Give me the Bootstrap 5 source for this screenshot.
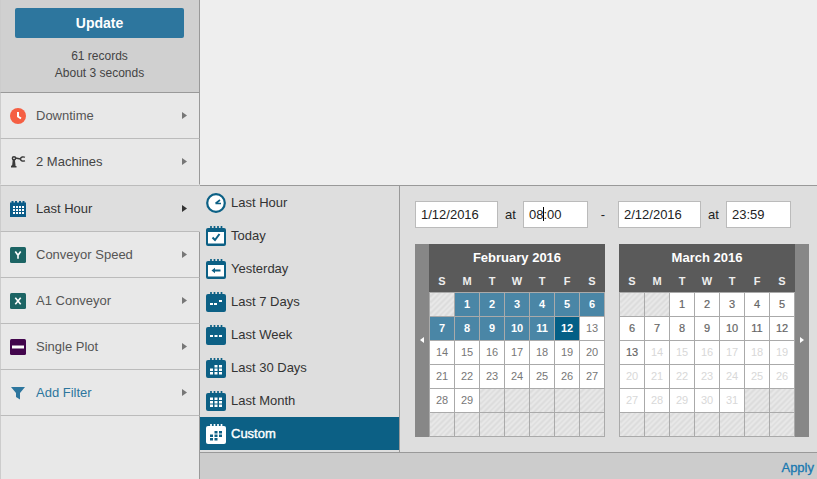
<!DOCTYPE html>
<html lang="en">
<head>
<meta charset="utf-8">
<meta name="viewport" content="width=device-width, initial-scale=1">
<title>Filters</title>
<link href="https://cdn.jsdelivr.net/npm/bootstrap@5.3.0/dist/css/bootstrap.min.css" rel="stylesheet">
<style>
  body { font: 13px/17px "Liberation Sans", Arial, sans-serif; color: #333; background: #eee; }
  .side { width: 200px; background: #e8e8e8; }
  .side > * { border-left: 1px solid #ccc; border-right: 1px solid #999; }
  .summary { background: #d0d0d0; border-bottom: 1px solid #999; padding: 8px 15px 10px 14px; font-size: 12px; color: #444; }
  .btn-update { background: #2d769e; color: #fff; font: bold 14px/20px "Liberation Sans", Arial, sans-serif; padding: 5px; border: 0; border-radius: 2px; margin-bottom: 10px; }
  .btn-update:hover { background: #25688c; color: #fff; }
  .filter-item { display: flex; align-items: center; gap: 10px; height: 46px; padding: 0 12px 0 9px; background: transparent; border-width: 0 1px 1px; border-style: solid; border-color: #bbb #999 #bbb #ccc; color: #555; text-align: left; }
  .filter-item.strong { color: #444; }
  .filter-item:has(+ .current) { border-bottom-color: #e8e8e8; }
  .filter-item.current { height: 47px; border-top: 1px solid #bbb; background: #dedede; border-right-color: #dedede; color: #333; }
  .filter-item.add { color: #2d769e; }
  .arrow { width: 5px; height: 7px; fill: #777; }
  .current .arrow { fill: #333; }
  .flyout { background: #dedede; border-top: 1px solid #999; }
  .presets { width: 200px; border-right: 1px solid #999; padding-bottom: 2px; }
  .preset { display: flex; align-items: center; gap: 5px; width: 100%; height: 33px; padding: 0 6px; border: 0; background: transparent; color: #333; --ink: #0c6085; }
  .preset.chosen { background: #0c6085; color: #fff; --ink: #fff; -webkit-text-stroke: 0.4px #fff; }
  .range { padding: 15px 8px 15px 15px; color: #222; }
  .field { height: 27px; padding: 0 5px; border: 1px solid #bbb; border-radius: 0; background: #fff; color: #222; }
  .f-date { width: 83px; }
  .f-time { width: 65px; }
  .sep { width: 25px; text-align: center; }
  .sep-wide { width: 30px; text-align: center; }
  .caret { position: absolute; left: 20px; top: 6px; width: 1px; height: 14px; background: #000; }
  .cals { margin-top: 16px; }
  .pager { width: 14px; padding: 0; border: 0; background: #878787; }
  .pager svg { width: 4px; height: 6px; fill: #fff; display: block; margin: auto; }
  .cal { width: 176px; table-layout: fixed; border-collapse: collapse; text-align: center; font-size: 11px; line-height: 16px; color: #777; background: #5a5a5a; }
  .cal caption { caption-side: top; background: #5a5a5a; color: #fff; font: bold 13px/28px "Liberation Sans", Arial, sans-serif; text-align: center; padding: 0; }
  .cal thead th { height: 20px; padding: 0; color: #eee; line-height: 18px; vertical-align: top; }
  .cal tbody td { height: 24px; padding: 0; border: 1px solid #aaa; background: #fff; }
  .cal tbody td.pick { background: #4a86a6; color: #fff; font-weight: bold; }
  .cal tbody td.last { background: #045f86; color: #fff; font-weight: bold; }
  .cal tbody td.open { color: #666; -webkit-text-stroke: 0.2px #666; }
  .cal tbody td.off { color: #d8d8d8; }
  .cal tbody td.none { background: repeating-linear-gradient(135deg, #e8e8e8 0 2px, #dcdcdc 2px 4px); }
  .foot { background: #ccc; border-top: 1px solid #999; padding: 6px 3px 3px; text-align: right; }
  .foot a { color: #1878b0; text-decoration: none; -webkit-text-stroke: 0.3px #1878b0; }
</style>
<script src="https://cdn.jsdelivr.net/npm/bootstrap@5.3.0/dist/js/bootstrap.bundle.min.js"></script>
</head>
<body>
<svg class="d-none" aria-hidden="true">
  <symbol id="right" viewBox="0 0 5 7"><path d="M0 0L5 3.5L0 7z"/></symbol>
  <symbol id="calbody" viewBox="0 0 20 20"><path d="M2 2H18Q20 2 20 4V18Q20 20 18 20H2Q0 20 0 18V4Q0 2 2 2z"/><path d="M5 0V3M8.500 0V3M12 0V3M15.500 0V3" stroke="var(--ink)" stroke-width="1.700"/></symbol>
</svg>
<div class="d-flex min-vh-100">
  <aside class="side d-flex flex-column flex-shrink-0">
    <div class="summary text-center">
      <button type="button" class="btn btn-update w-100 d-block">Update</button>
      <div>61 records</div>
      <div>About 3 seconds</div>
    </div>
    <button type="button" class="filter-item">
      <svg width="16" height="16"><circle cx="8" cy="8" r="8" fill="#f55f43"/><path d="M8 4V8.500L11 10.500" fill="none" stroke="#fff" stroke-width="2"/></svg>
      <span class="flex-grow-1">Downtime</span><svg class="arrow"><use href="#right"/></svg>
    </button>
    <button type="button" class="filter-item strong">
      <svg width="16" height="16" fill="none" stroke="#3a3a3a"><path d="M2.200 11L2.800 5H4.800L5.500 11V12H6.500V13.500H1V12z" fill="#3a3a3a" stroke="none"/><circle cx="4" cy="4.300" r="1.600" stroke-width="1.500"/><path d="M5.400 4L10.500 5" stroke-width="1.700"/><path d="M14.800 3.400C13.500 2.400 10.500 2.800 10.500 5C10.500 7.300 13.500 7.600 14.800 6.600" stroke-width="1.400"/></svg>
      <span class="flex-grow-1">2 Machines</span><svg class="arrow"><use href="#right"/></svg>
    </button>
    <button type="button" class="filter-item current">
      <svg width="16" height="16"><path d="M0 1.500H1.500V0H3.500V1.500H5V0H7V1.500H9V0H11V1.500H12.500V0H14.500V1.500H16V16H0z" fill="#0b5c88"/><path d="M3 5h2v2H3zM6 5h2v2H6zM9 5h2v2H9zM12 5h2v2h-2zM3 8h2v2H3zM6 8h2v2H6zM9 8h2v2H9zM12 8h2v2h-2zM3 11h2v2H3zM6 11h2v2H6zM9 11h2v2H9zM12 11h2v2h-2z" fill="#fff"/></svg>
      <span class="flex-grow-1">Last Hour</span><svg class="arrow"><use href="#right"/></svg>
    </button>
    <button type="button" class="filter-item">
      <svg width="16" height="16"><rect width="16" height="16" rx="1.500" fill="#1c6464"/><path d="M5.300 4.500L8 8.300L10.700 4.500M8 8V11.800" fill="none" stroke="#fff" stroke-width="1.600"/></svg>
      <span class="flex-grow-1">Conveyor Speed</span><svg class="arrow"><use href="#right"/></svg>
    </button>
    <button type="button" class="filter-item">
      <svg width="16" height="16"><rect width="16" height="16" rx="1.500" fill="#1c6464"/><path d="M5.300 4.700L10.700 11.300M10.700 4.700L5.300 11.300" stroke="#fff" stroke-width="1.600"/></svg>
      <span class="flex-grow-1">A1 Conveyor</span><svg class="arrow"><use href="#right"/></svg>
    </button>
    <button type="button" class="filter-item">
      <svg width="16" height="16"><rect width="16" height="16" rx="1.500" fill="#43064d"/><path d="M2 6.500H14V9.500H2z" fill="#fff"/></svg>
      <span class="flex-grow-1">Single Plot</span><svg class="arrow"><use href="#right"/></svg>
    </button>
    <button type="button" class="filter-item add">
      <svg width="16" height="16"><path d="M1 2H15L10 8V14.500L6 12V8z" fill="#2d769e"/></svg>
      <span class="flex-grow-1">Add Filter</span><svg class="arrow"><use href="#right"/></svg>
    </button>
    <div class="flex-grow-1"></div>
  </aside>
  <main class="flex-grow-1 d-flex flex-column">
    <div class="flex-grow-1"></div>
    <section class="flyout d-flex">
      <div class="presets flex-shrink-0">
        <button type="button" class="preset"><svg width="20" height="20"><circle cx="10" cy="10" r="8.800" fill="#fff" stroke="#0c6085" stroke-width="2.200"/><path d="M9.500 10.500H15M9.500 10.500L14 7" fill="none" stroke="#0c6085" stroke-width="1.600"/></svg>Last Hour</button>
        <button type="button" class="preset"><svg width="20" height="20" fill="#0c6085"><use href="#calbody"/><path d="M2 6H18V17.500H2z" fill="#fff"/><path d="M6.500 11.500L9 14L13.500 8" fill="none" stroke="#0c6085" stroke-width="2"/></svg>Today</button>
        <button type="button" class="preset"><svg width="20" height="20" fill="#0c6085"><use href="#calbody"/><path d="M2 6H18V17.500H2z" fill="#fff"/><path d="M5.500 11.500L9 8.800V10.600H14.500V12.400H9V14.200z"/></svg>Yesterday</button>
        <button type="button" class="preset"><svg width="20" height="20" fill="#0c6085"><use href="#calbody"/><path d="M4 11h3v2H4zM8 11h3v2H8zM13 8h3v2h-3z" fill="#fff"/></svg>Last 7 Days</button>
        <button type="button" class="preset"><svg width="20" height="20" fill="#0c6085"><use href="#calbody"/><path d="M4 10h3v2H4zM8.500 10h3v2h-3zM13 10h3v2h-3z" fill="#fff"/></svg>Last Week</button>
        <button type="button" class="preset"><svg width="20" height="20" fill="#0c6085"><use href="#calbody"/><path d="M8.500 7h3v2.500h-3zM13 7h3v2.500h-3zM4 10.500h3V13H4zM8.500 10.500h3V13h-3zM13 10.500h3V13h-3zM4 14h3v2.500H4zM8.500 14h3v2.500h-3zM13 14h3v2.500h-3z" fill="#fff"/></svg>Last 30 Days</button>
        <button type="button" class="preset"><svg width="20" height="20" fill="#0c6085"><use href="#calbody"/><path d="M4 6.500h3V9H4zM8.500 6.500h3V9h-3zM13 6.500h3V9h-3zM4 10h3v2.500H4zM8.500 10h3v2.500h-3zM13 10h3v2.500h-3zM4 13.500h3V16H4zM8.500 13.500h3V16h-3zM13 13.500h3V16h-3z" fill="#fff"/></svg>Last Month</button>
        <button type="button" class="preset chosen"><svg width="20" height="20" fill="#fff"><use href="#calbody"/><path d="M8.500 7h3v2.500h-3zM13 7h3v2.500h-3zM4 10.500h3V13H4zM8.500 10.500h3V13h-3zM13 10.500h3V13h-3zM4 14h3v2.500H4zM8.500 14h3v2.500h-3z" fill="#0c6085"/></svg>Custom</button>
      </div>
      <div class="range flex-grow-1">
        <div class="d-flex align-items-center">
          <input class="field f-date" type="text" value="1/12/2016" aria-label="Start date">
          <span class="sep">at</span>
          <div class="position-relative d-flex"><input class="field f-time" type="text" value="08:00" aria-label="Start time"><span class="caret"></span></div>
          <span class="sep-wide">-</span>
          <input class="field f-date" type="text" value="2/12/2016" aria-label="End date">
          <span class="sep">at</span>
          <input class="field f-time" type="text" value="23:59" aria-label="End time">
        </div>
        <div class="cals d-flex">
          <button type="button" class="pager" aria-label="Previous month"><svg viewBox="0 0 4 6"><path d="M4 0L0 3L4 6z"/></svg></button>
          <table class="cal">
            <caption>February 2016</caption>
            <thead><tr><th>S</th><th>M</th><th>T</th><th>W</th><th>T</th><th>F</th><th>S</th></tr></thead>
            <tbody>
              <tr><td class="none"></td><td class="pick">1</td><td class="pick">2</td><td class="pick">3</td><td class="pick">4</td><td class="pick">5</td><td class="pick">6</td></tr>
              <tr><td class="pick">7</td><td class="pick">8</td><td class="pick">9</td><td class="pick">10</td><td class="pick">11</td><td class="last">12</td><td>13</td></tr>
              <tr><td>14</td><td>15</td><td>16</td><td>17</td><td>18</td><td>19</td><td>20</td></tr>
              <tr><td>21</td><td>22</td><td>23</td><td>24</td><td>25</td><td>26</td><td>27</td></tr>
              <tr><td>28</td><td>29</td><td class="none"></td><td class="none"></td><td class="none"></td><td class="none"></td><td class="none"></td></tr>
              <tr><td class="none"></td><td class="none"></td><td class="none"></td><td class="none"></td><td class="none"></td><td class="none"></td><td class="none"></td></tr>
            </tbody>
          </table>
          <table class="cal ms-auto">
            <caption>March 2016</caption>
            <thead><tr><th>S</th><th>M</th><th>T</th><th>W</th><th>T</th><th>F</th><th>S</th></tr></thead>
            <tbody>
              <tr><td class="none"></td><td class="none"></td><td class="open">1</td><td class="open">2</td><td class="open">3</td><td class="open">4</td><td class="open">5</td></tr>
              <tr><td class="open">6</td><td class="open">7</td><td class="open">8</td><td class="open">9</td><td class="open">10</td><td class="open">11</td><td class="open">12</td></tr>
              <tr><td class="open">13</td><td class="off">14</td><td class="off">15</td><td class="off">16</td><td class="off">17</td><td class="off">18</td><td class="off">19</td></tr>
              <tr><td class="off">20</td><td class="off">21</td><td class="off">22</td><td class="off">23</td><td class="off">24</td><td class="off">25</td><td class="off">26</td></tr>
              <tr><td class="off">27</td><td class="off">28</td><td class="off">29</td><td class="off">30</td><td class="off">31</td><td class="none"></td><td class="none"></td></tr>
              <tr><td class="none"></td><td class="none"></td><td class="none"></td><td class="none"></td><td class="none"></td><td class="none"></td><td class="none"></td></tr>
            </tbody>
          </table>
          <button type="button" class="pager" aria-label="Next month"><svg viewBox="0 0 4 6"><path d="M0 0L4 3L0 6z"/></svg></button>
        </div>
      </div>
    </section>
    <footer class="foot"><a href="#">Apply</a></footer>
  </main>
</div>
</body>
</html>
